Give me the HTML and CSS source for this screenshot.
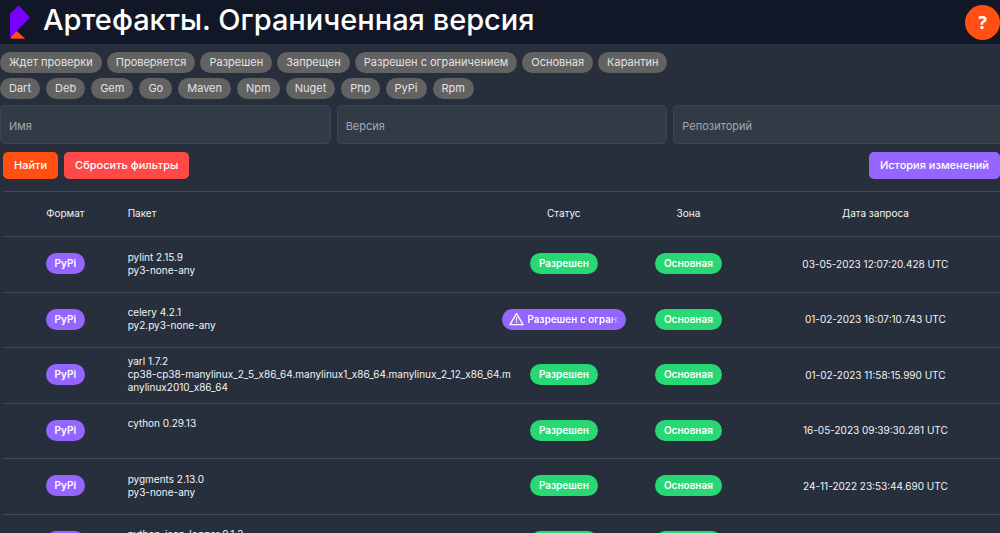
FILE: index.html
```html
<!DOCTYPE html>
<html lang="ru">
<head>
<meta charset="utf-8">
<title>Артефакты</title>
<link rel="stylesheet" href="styles.css">
</head>
<body>
<header class="header">
  <svg class="logo" viewBox="0 0 22 36" aria-hidden="true">
    <path fill="#7700ff" d="M0 9 9 0 21 13 7 27 0 34z"/>
    <path fill="#ff4f12" d="M7 27 16 35H1V33z"/>
  </svg>
  <h1 class="title">Артефакты. Ограниченная версия</h1>
  <button class="help" type="button">?</button>
</header>
<main class="main">
  <div class="chips chips-status">
    <button class="chip" type="button">Ждет проверки</button>
    <button class="chip" type="button">Проверяется</button>
    <button class="chip" type="button">Разрешен</button>
    <button class="chip" type="button">Запрещен</button>
    <button class="chip" type="button">Разрешен с ограничением</button>
    <button class="chip" type="button">Основная</button>
    <button class="chip" type="button">Карантин</button>
  </div>
  <div class="chips">
    <button class="chip" type="button">Dart</button>
    <button class="chip" type="button">Deb</button>
    <button class="chip" type="button">Gem</button>
    <button class="chip" type="button">Go</button>
    <button class="chip" type="button">Maven</button>
    <button class="chip" type="button">Npm</button>
    <button class="chip" type="button">Nuget</button>
    <button class="chip" type="button">Php</button>
    <button class="chip" type="button">PyPi</button>
    <button class="chip" type="button">Rpm</button>
  </div>
  <form class="fields">
    <input class="field" type="text" aria-label="Имя" placeholder="Имя">
    <input class="field" type="text" aria-label="Версия" placeholder="Версия">
    <input class="field" type="text" aria-label="Репозиторий" placeholder="Репозиторий">
  </form>
  <div class="actions">
    <button class="btn btn-find" type="button">Найти</button>
    <button class="btn btn-reset" type="button">Сбросить фильтры</button>
    <button class="btn btn-history" type="button">История изменений</button>
  </div>
  <table class="table">
    <colgroup><col class="col-1"><col class="col-3"><col class="col-1"><col class="col-1"><col class="col-2"></colgroup>
    <thead>
      <tr><th>Формат</th><th class="package">Пакет</th><th>Статус</th><th>Зона</th><th>Дата запроса</th></tr>
    </thead>
    <tbody>
      <tr>
        <td><span class="badge violet">PyPi</span></td>
        <td class="package"><div class="name">pylint 2.15.9<br>py3-none-any</div></td>
        <td><span class="badge green">Разрешен</span></td>
        <td><span class="badge green">Основная</span></td>
        <td>03-05-2023 12:07:20.428 UTC</td>
      </tr>
      <tr>
        <td><span class="badge violet">PyPi</span></td>
        <td class="package"><div class="name">celery 4.2.1<br>py2.py3-none-any</div></td>
        <td><span class="badge violet limited"><svg class="warn" viewBox="0 0 16 14" aria-hidden="true"><path d="M8 1.2 15 13H1z" fill="none" stroke="#fff" stroke-width="1.4" stroke-linejoin="round"/><path d="M8 5.2v3.6M8 10v1.3" stroke="#fff" stroke-width="1.3"/></svg><span class="limited-text">Разрешен с ограничением</span></span></td>
        <td><span class="badge green">Основная</span></td>
        <td>01-02-2023 16:07:10.743 UTC</td>
      </tr>
      <tr>
        <td><span class="badge violet">PyPi</span></td>
        <td class="package"><div class="name">yarl 1.7.2<br>cp38-cp38-manylinux_2_5_x86_64.manylinux1_x86_64.manylinux_2_12_x86_64.m<br>anylinux2010_x86_64</div></td>
        <td><span class="badge green">Разрешен</span></td>
        <td><span class="badge green">Основная</span></td>
        <td>01-02-2023 11:58:15.990 UTC</td>
      </tr>
      <tr>
        <td><span class="badge violet">PyPi</span></td>
        <td class="package"><div class="name">cython 0.29.13</div></td>
        <td><span class="badge green">Разрешен</span></td>
        <td><span class="badge green">Основная</span></td>
        <td>16-05-2023 09:39:30.281 UTC</td>
      </tr>
      <tr>
        <td><span class="badge violet">PyPi</span></td>
        <td class="package"><div class="name">pygments 2.13.0<br>py3-none-any</div></td>
        <td><span class="badge green">Разрешен</span></td>
        <td><span class="badge green">Основная</span></td>
        <td>24-11-2022 23:53:44.690 UTC</td>
      </tr>
      <tr>
        <td><span class="badge violet">PyPi</span></td>
        <td class="package"><div class="name">python-json-logger 0.1.2</div></td>
        <td><span class="badge green">Разрешен</span></td>
        <td><span class="badge green">Основная</span></td>
        <td></td>
      </tr>
    </tbody>
  </table>
</main>
</body>
</html>
```

FILE: styles.css
```css
* { box-sizing: border-box; }
body {
  margin: 0;
  height: 100vh;
  overflow: hidden;
  background: #282f3c;
  color: #f2f4f8;
  font-family: Inter, "Liberation Sans", sans-serif;
  font-size: 10px;
}
button, input { font-family: inherit; margin: 0; }
button { border: 0; }
.header {
  display: flex;
  align-items: center;
  height: 44px;
  padding-left: 10px;
  background: #111726;
}
.logo { width: 21px; height: 35px; }
.title {
  flex: 1;
  margin: 0 0 4px 12px;
  font-size: 29px;
  font-weight: 500;
  line-height: 36px;
  white-space: nowrap;
  color: #fff;
}
.help {
  width: 35px;
  height: 35px;
  padding: 0;
  border-radius: 50%;
  background: #ff4f12;
  color: #fff;
  font-family: "Noto Sans", sans-serif;
  font-size: 18px;
  font-weight: 700;
}
.main { padding-top: 8px; }
.chips { display: flex; gap: 6px; margin-bottom: 6px; }
.chips-status { gap: 5px; margin-bottom: 5px; }
.chip {
  height: 21px;
  padding: 0 9px;
  border-radius: 11px;
  background: #626262;
  color: #e2e2e2;
  font-size: 11px;
  line-height: 21px;
  white-space: nowrap;
}
.fields {
  display: grid;
  grid-template-columns: repeat(3, 1fr);
  gap: 6px;
  margin-right: -4px;
}
.field {
  width: 100%;
  height: 39px;
  padding: 2px 8px 0;
  border: 1px solid #3c4652;
  border-radius: 5px;
  background: #323a46;
  color: #f2f4f8;
  font-size: 11px;
}
.field::placeholder { color: #a3a8b0; opacity: 1; }
.actions { display: flex; gap: 6px; padding: 8px 0 12px 3px; }
.btn {
  height: 27px;
  padding: 0 11px 2px;
  border-radius: 5px;
  color: #fff;
  font-size: 11px;
  font-weight: 500;
  white-space: nowrap;
}
.btn-find { background: #ff4f12; }
.btn-reset { background: #ff4848; }
.btn-history { margin-left: auto; background: #9566ff; }
.table {
  width: calc(100% - 3px);
  margin-left: 3px;
  table-layout: fixed;
  border-collapse: collapse;
  border-top: 1px solid #424b56;
}
.col-1 { width: 12.5%; }
.col-2 { width: 25%; }
.col-3 { width: 37.5%; }
.table th { height: 45px; padding: 0 0 2px; font-weight: 400; }
.table td { height: 55px; padding: 0 0 2px; text-align: center; }
.table tbody tr:nth-child(odd) td { height: 56px; }
.table tr { border-bottom: 1px solid #424b56; }
.table .package { text-align: left; }
.name { min-height: 26px; line-height: 13px; white-space: nowrap; }
.badge {
  display: inline-block;
  height: 21px;
  padding: 0 9px;
  border-radius: 11px;
  color: #fff;
  font-weight: 600;
  line-height: 20px;
  vertical-align: middle;
}
.violet { background: #9566ff; }
.green { background: #27d875; }
.limited { display: flex; align-items: center; gap: 4px; padding: 0 7px; }
.warn { flex: none; width: 15px; height: 14px; }
.limited-text {
  overflow: hidden;
  white-space: nowrap;
  mask-image: linear-gradient(to right, #000 90%, transparent);
}
```
